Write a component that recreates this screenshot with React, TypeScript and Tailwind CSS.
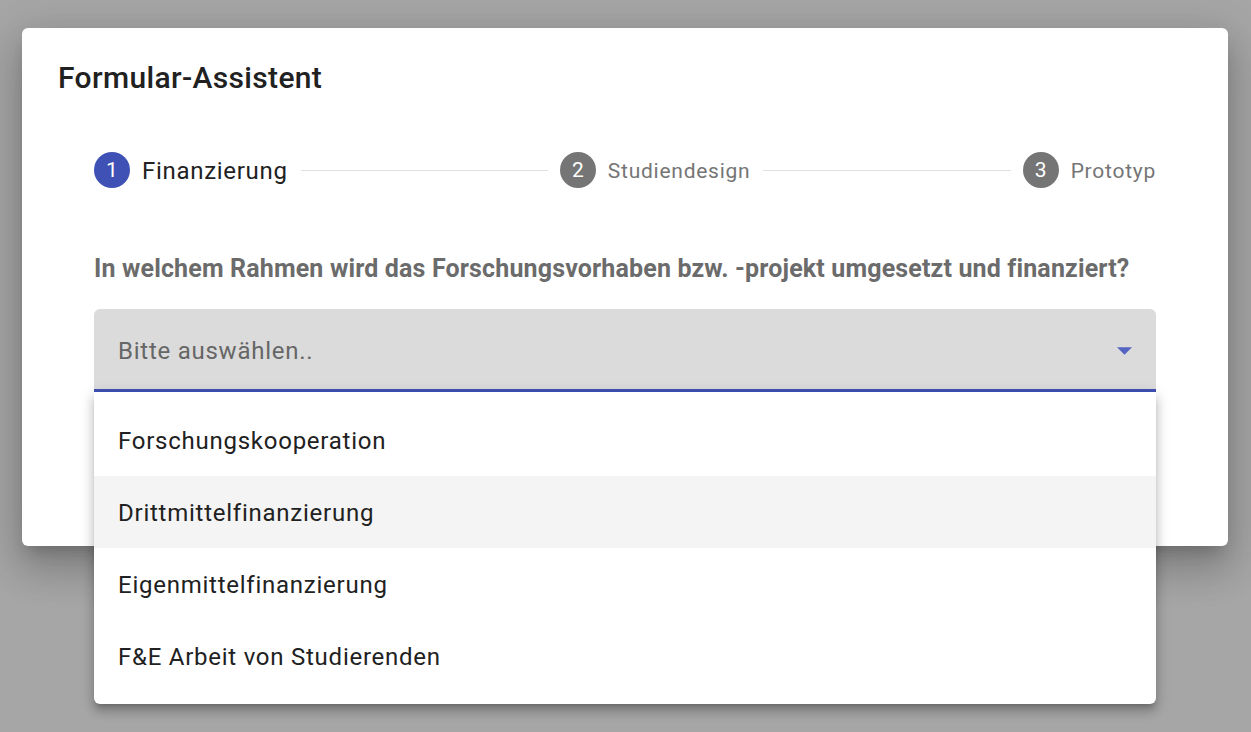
const steps = [
  { n: 1, label: "Finanzierung", active: true },
  { n: 2, label: "Studiendesign", active: false },
  { n: 3, label: "Prototyp", active: false },
];

const options = [
  "Forschungskooperation",
  "Drittmittelfinanzierung",
  "Eigenmittelfinanzierung",
  "F&E Arbeit von Studierenden",
];

function StepHeader({ n, label, active }: { n: number; label: string; active: boolean }) {
  return (
    <div className="flex items-center gap-[12px] shrink-0 h-[36px]">
      <div
        className={
          active
            ? "w-[36px] h-[36px] pt-[2px] rounded-full bg-[#3f51b5] text-white flex items-center justify-center text-[21px]"
            : "w-[36px] h-[36px] pt-[2px] rounded-full bg-[#757575] text-white flex items-center justify-center text-[21px]"
        }
      >
        {n}
      </div>
      <span
        className={
          active
            ? "h-[36px] flex items-center pt-[2px] text-[24px] text-[#212121] tracking-[0.7px]"
            : "h-[36px] flex items-center pt-[4px] text-[21px] text-[#757575] tracking-[0.75px]"
        }
      >
        {label}
      </span>
    </div>
  );
}

export default function App() {
  return (
    <div className="w-[1251px] h-[732px] bg-[#a6a6a6] pt-[28px] pl-[22px] overflow-hidden font-['Roboto',sans-serif]">
      <div className="w-[1206px] h-[518px] bg-white rounded-[6px] px-[36px] pt-[35px] shadow-[0_11px_15px_-7px_rgba(0,0,0,0.2),0_24px_38px_3px_rgba(0,0,0,0.14),0_9px_46px_8px_rgba(0,0,0,0.12)]">
        {/* Titel */}
        <h2 className="text-[30px] leading-[30px] font-medium text-[#212121] tracking-[0.35px]">Formular-Assistent</h2>

        <div className="px-[36px]">
          {/* Stepper */}
          <div className="flex items-center mt-[59px] h-[36px]">
            <StepHeader {...steps[0]} />
            <div className="flex-1 h-px bg-[#e0e0e0] ml-[13px] mr-[12px]" />
            <StepHeader {...steps[1]} />
            <div className="flex-1 h-px bg-[#e0e0e0] ml-[13px] mr-[12px]" />
            <StepHeader {...steps[2]} />
          </div>

          {/* Frage */}
          <p className="mt-[66px] text-[25px] leading-[30px] font-bold text-[#6b6b6b] tracking-[0.15px]">
            In welchem Rahmen wird das Forschungsvorhaben bzw. -projekt umgesetzt und finanziert?
          </p>

          {/* Auswahlfeld */}
          <div className="relative mt-[25px]">
            <div className="h-[83px] bg-[#dbdbdb] rounded-t-[6px] border-b-[3px] border-[#3f51b5] flex items-center justify-between pl-[24px] pr-[24px]">
              <span className="text-[24px] text-[#666666] tracking-[0.75px] pt-[4px]">Bitte auswählen..</span>
              <svg width="15" height="8" viewBox="0 0 10 5" className="mt-[4px]">
                <path d="M0 0 L5 5 L10 0 Z" fill="#5563c1" />
              </svg>
            </div>

            {/* Dropdown */}
            <div className="absolute left-0 top-full w-full bg-white rounded-b-[6px] py-[12px] shadow-[0_5px_5px_-3px_rgba(0,0,0,0.2),0_8px_10px_1px_rgba(0,0,0,0.14),0_3px_14px_2px_rgba(0,0,0,0.12)]">
              {options.map((o, i) => (
                <div
                  key={o}
                  className={
                    i === 1
                      ? "h-[72px] px-[24px] pt-[2px] flex items-center bg-[#f4f4f4] text-[24px] text-[#212121] tracking-[0.75px]"
                      : "h-[72px] px-[24px] pt-[2px] flex items-center text-[24px] text-[#212121] tracking-[0.75px]"
                  }
                >
                  {o}
                </div>
              ))}
            </div>
          </div>
        </div>
      </div>
    </div>
  );
}
